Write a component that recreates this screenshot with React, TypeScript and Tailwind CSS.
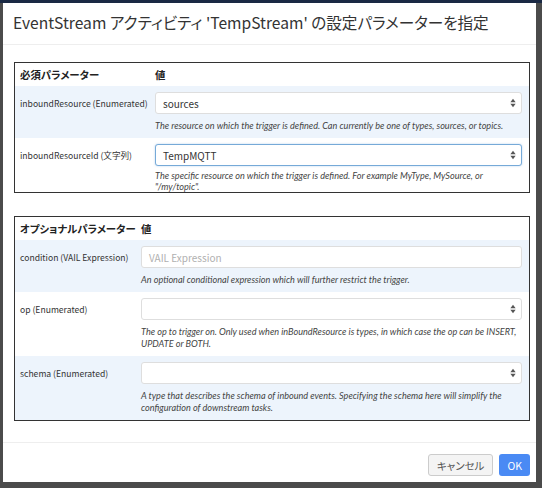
type Param = {
  name: string;
  kind: "select" | "text";
  value?: string;
  placeholder?: string;
  focused?: boolean;
  help: string;
  shaded?: boolean;
  tight?: boolean;
};

const required: Param[] = [
  {
    name: "inboundResource (Enumerated)",
    kind: "select",
    value: "sources",
    help: "The resource on which the trigger is defined. Can currently be one of types, sources, or topics.",
    shaded: true,
  },
  {
    name: "inboundResourceId (文字列)",
    kind: "select",
    value: "TempMQTT",
    focused: true,
    tight: true,
    help: 'The specific resource on which the trigger is defined. For example MyType, MySource, or "/my/topic".',
  },
];

const optional: Param[] = [
  {
    name: "condition (VAIL Expression)",
    kind: "text",
    placeholder: "VAIL Expression",
    help: "An optional conditional expression which will further restrict the trigger.",
    shaded: true,
  },
  {
    name: "op (Enumerated)",
    kind: "select",
    help: "The op to trigger on. Only used when inBoundResource is types, in which case the op can be INSERT, UPDATE or BOTH.",
  },
  {
    name: "schema (Enumerated)",
    kind: "select",
    help: "A type that describes the schema of inbound events. Specifying the schema here will simplify the configuration of downstream tasks.",
    shaded: true,
  },
];

const SelectArrows = () => (
  <svg width="6" height="10" viewBox="0 0 6 10" className="shrink-0">
    <path d="M3 0.8 L5.6 4.2 H0.4 Z" fill="#555" />
    <path d="M3 9.2 L5.6 5.8 H0.4 Z" fill="#555" />
  </svg>
);

const ParamRow = ({ p, col }: { p: Param; col: string }) => (
  <div className={`flex ${p.shaded ? "bg-[#edf4fc]" : "bg-white"}`}>
    <div className={`${col} shrink-0 whitespace-nowrap pl-[5px] pt-[11px] text-[8.6px] leading-[12px] text-[#333]`}>
      {p.name}
    </div>
    <div className={`flex-1 pr-[7px] pt-[6px] ${p.tight ? "pb-0" : "pb-[6px]"}`}>
      <div
        className={`flex h-[22px] items-center justify-between rounded-[3px] border bg-white pl-[7px] pr-[5px] text-[10px] leading-[13px] ${
          p.focused ? "border-[#76aad8] shadow-[0_0_2px_rgba(102,160,220,0.5)]" : "border-[#dedede]"
        }`}
      >
        {p.kind === "text" ? (
          <span className="text-[#b0b0b0]">{p.placeholder}</span>
        ) : (
          <span className="text-[#333]">{p.value ?? ""}</span>
        )}
        {p.kind === "select" && <SelectArrows />}
      </div>
      <p
        className={`pr-[1px] font-['Lato'] text-[9.1px] italic text-[#444] ${
          p.tight ? "mt-[5px] leading-[10.5px]" : "mt-[6px] leading-[12px]"
        }`}
      >
        {p.help}
      </p>
    </div>
  </div>
);

const ParamTable = ({ title, rows, col }: { title: string; rows: Param[]; col: string }) => (
  <div className="border border-[#333] bg-white">
    <div className="flex h-[23px] items-center text-[10.4px] font-bold leading-[12px] text-[#222]">
      <div className={`${col} shrink-0 whitespace-nowrap pl-[5px]`}>{title}</div>
      <div>値</div>
    </div>
    {rows.map((p) => (
      <ParamRow key={p.name} p={p} col={col} />
    ))}
  </div>
);

export default function App() {
  return (
    <div
      className="h-[488px] w-[542px] overflow-hidden bg-[#4b4b4b] [font-feature-settings:'palt']"
      style={{ fontFamily: '"Noto Sans CJK JP", "Noto Sans", sans-serif' }}
    >
      <div className="h-[3px] bg-[#1a2944]" />
      <div className="ml-[3px] flex h-[479px] w-[533px] flex-col bg-white">
        <div className="flex h-[42px] shrink-0 items-center border-b border-[#eee] pb-[4px] pl-[10px] text-[15.6px] leading-[20px] text-[#333]">
          EventStream アクティビティ 'TempStream' の設定パラメーターを指定
        </div>
        <div className="flex flex-1 flex-col gap-[23px] pl-[11px] pr-[6px] pt-[17px]">
          <ParamTable title="必須パラメーター" rows={required} col="w-[140px]" />
          <ParamTable title="オプショナルパラメーター" rows={optional} col="w-[126px]" />
        </div>
        <div className="flex h-[40px] shrink-0 items-start justify-end gap-[6px] border-t border-[#eee] pr-[6px] pt-[11px]">
          <button className="h-[22px] rounded-[3px] border border-[#ccc] bg-[#f4f4f4] px-[8px] text-[10.5px] leading-[13px] text-[#555]">
            キャンセル
          </button>
          <button className="h-[22px] rounded-[3px] bg-[#4a8af4] px-[8px] text-[10.5px] leading-[13px] text-white">
            OK
          </button>
        </div>
      </div>
    </div>
  );
}
